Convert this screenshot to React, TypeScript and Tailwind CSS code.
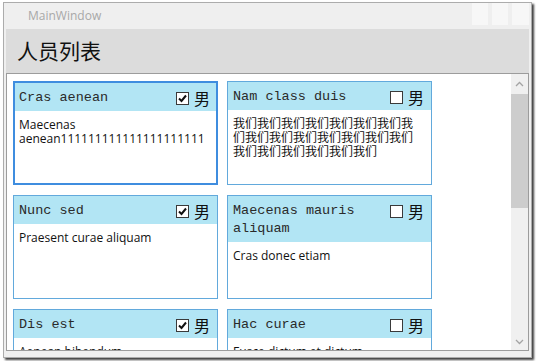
import React from 'react';

interface Person {
  name: string;
  male: boolean;
  note: string;
}

const people: Person[] = [
  { name: 'Cras aenean', male: true, note: 'Maecenas aenean111111111111111111111' },
  { name: 'Nam class duis', male: false, note: '我们'.repeat(21) },
  { name: 'Nunc sed', male: true, note: 'Praesent curae aliquam' },
  { name: 'Maecenas mauris aliquam', male: false, note: 'Cras donec etiam' },
  { name: 'Dis est', male: true, note: 'Aenean bibendum' },
  { name: 'Hac curae', male: false, note: 'Fusce dictum et dictum' },
];

const cjk = '"Noto Sans CJK SC", sans-serif';

function CheckBox({ checked }: { checked: boolean }) {
  return (
    <div className="w-[13px] h-[13px] border border-[#3a3a3a] bg-white flex items-center justify-center">
      {checked && (
        <svg width="11" height="11" viewBox="0 0 11 11">
          <path d="M2 5.5 L4.5 8 L9 2.5" fill="none" stroke="#111" strokeWidth="2" />
        </svg>
      )}
    </div>
  );
}

function PersonCard({ p, selected }: { p: Person; selected: boolean }) {
  return (
    <div
      className={
        'w-[205px] h-[104px] bg-white overflow-hidden flex flex-col shrink-0 ' +
        (selected ? 'border-2 border-[#3f8ddf]' : 'border border-[#62a9dc]')
      }
    >
      <div
        className={
          'bg-[#b2e5f4] flex items-start pt-[6px] pb-[4px] shrink-0 ' +
          (selected ? 'pl-[4px] pr-[6px]' : 'pl-[5px] pr-[7px]')
        }
      >
        <div className="flex-1 text-[13.5px] leading-[18px] text-[#2a2a2a]" style={{ fontFamily: '"Liberation Mono", monospace' }}>
          {p.name}
        </div>
        <div className="flex items-center h-[18px] gap-[5px] ml-2">
          <CheckBox checked={p.male} />
          <span className="text-[16px] leading-[18px] text-[#111]" style={{ fontFamily: cjk }}>男</span>
        </div>
      </div>
      <div
        className={
          'pt-[7px] text-[12px] leading-[14px] text-[#111] break-words ' +
          (selected ? 'pl-[4px] pr-[7px]' : 'pl-[5px] pr-[8px]')
        }
        style={{ fontFamily: '"Open Sans", "Noto Sans CJK SC", sans-serif' }}
      >
        {p.note}
      </div>
    </div>
  );
}

function Chevron({ up }: { up: boolean }) {
  return (
    <svg width="9" height="6" viewBox="0 0 9 6">
      <path d={up ? 'M1 5 L4.5 1.5 L8 5' : 'M1 1 L4.5 4.5 L8 1'} fill="none" stroke="#a4a4a4" strokeWidth="1.3" />
    </svg>
  );
}

export default function App() {
  return (
    <div className="w-[537px] h-[361px] bg-white pl-[3px] pt-[2px] overflow-hidden">
      <div className="w-[529px] h-[356px] border border-[#acacac] bg-[#efefef] shadow-[2px_2px_2px_rgba(0,0,0,0.75)] flex flex-col">
        {/* title bar */}
        <div className="h-[26px] shrink-0 flex items-center pl-[24px] pr-[2px]">
          <span className="flex-1 text-[12px] text-[#a8a8a8]" style={{ fontFamily: '"Open Sans", sans-serif' }}>
            MainWindow
          </span>
          <div className="flex gap-[4px] self-start">
            <div className="w-[16px] h-[22px] bg-[#f7f7f7]" />
            <div className="w-[16px] h-[22px] bg-[#f7f7f7]" />
            <div className="w-[17px] h-[22px] bg-[#f7f7f7]" />
          </div>
        </div>

        <div className="flex-1 min-h-0 mx-[2px] mb-[6px] flex flex-col">
          {/* header */}
          <div className="h-[44px] shrink-0 bg-[#dcdcdc] flex items-center pl-[11px]">
            <span className="text-[21px] text-[#111]" style={{ fontFamily: cjk }}>人员列表</span>
          </div>

          {/* list */}
          <div className="flex-1 min-h-0 border border-[#9c9c9c] bg-white flex overflow-hidden">
            <div className="flex-1 pl-[6px] pt-[7px] flex flex-wrap content-start gap-x-[9px] gap-y-[10px] overflow-hidden">
              {people.map((p, i) => (
                <PersonCard key={i} p={p} selected={i === 0} />
              ))}
            </div>
            <div className="w-[17px] bg-[#f0f0f0] flex flex-col">
              <div className="h-[19px] flex items-center justify-center">
                <Chevron up />
              </div>
              <div className="mt-[1px] h-[114px] bg-[#cdcdcd]" />
              <div className="flex-1" />
              <div className="h-[17px] flex items-center justify-center">
                <Chevron up={false} />
              </div>
            </div>
          </div>
        </div>
      </div>
    </div>
  );
}
